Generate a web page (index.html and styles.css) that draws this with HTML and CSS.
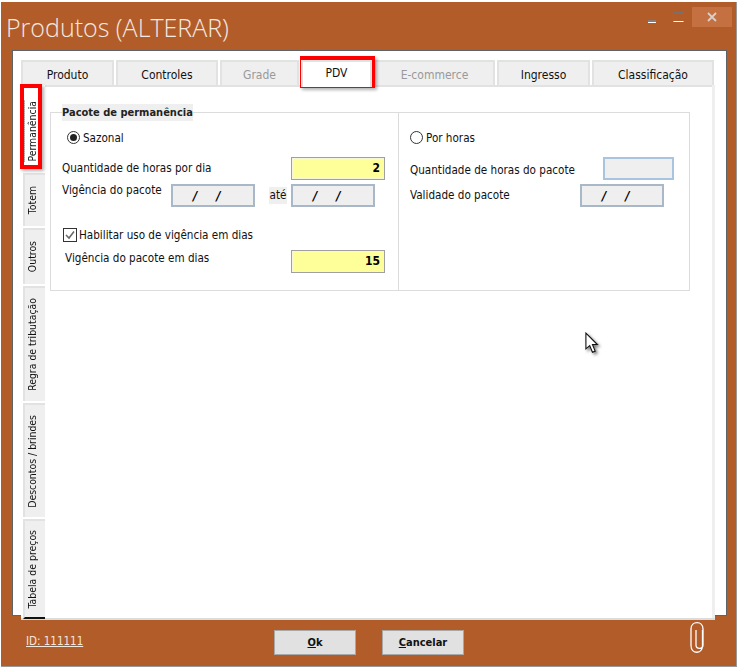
FILE: index.html
```html
<!DOCTYPE html>
<html lang="pt-BR">
<head>
<meta charset="utf-8">
<title>Produtos (ALTERAR)</title>
<link rel="stylesheet" href="styles.css">
</head>
<body>
<div class="window">
  <header class="titlebar">
    <h1 class="title">Produtos (ALTERAR)</h1>
    <div class="controls">
      <span class="ctl ctl-min"><i></i></span>
      <span class="ctl ctl-max"><i></i></span>
      <span class="ctl ctl-close"><svg width="12" height="10" viewBox="0 0 12 10"><path d="M2 1l8 8M10 1l-8 8" stroke="#d9d0ca" stroke-width="1.8" fill="none"/></svg></span>
    </div>
  </header>
  <div class="sheet">
    <div class="tabs-top">
      <div class="ttab t1">Produto</div>
      <div class="ttab t2">Controles</div>
      <div class="ttab t3 off">Grade</div>
      <div class="ttab t4 active">PDV</div>
      <div class="ttab t5 off">E-commerce</div>
      <div class="ttab t6">Ingresso</div>
      <div class="ttab t7">Classificação</div>
    </div>
    <div class="tabbody">
      <div class="tabs-side">
        <div class="stab s1 sactive"><span>Permanência</span></div>
        <div class="stab s2"><span>Totem</span></div>
        <div class="stab s3"><span>Outros</span></div>
        <div class="stab s4"><span>Regra de tributação</span></div>
        <div class="stab s5"><span>Descontos / brindes</span></div>
        <div class="stab s6"><span>Tabela de preços</span></div>
      </div>
      <main class="page">
        <section class="group">
          <div class="legend">Pacote de permanência</div>
          <div class="col col-left">
            <label class="radio-row r-left"><span class="radio on"></span>Sazonal</label>
            <div class="row row-qty"><span class="lbl">Quantidade de horas por dia</span><span class="input yellow">2</span></div>
            <div class="row row-vig">
              <span class="lbl">Vigência do pacote</span>
              <span class="input date d1"><b>/</b><b>/</b></span>
              <span class="ate">até</span>
              <span class="input date d2"><b>/</b><b>/</b></span>
            </div>
            <label class="check-row"><span class="check"><svg width="12" height="12" viewBox="0 0 12 12"><path d="M2 6l3 3 5-6.500" stroke="#666" stroke-width="1.500" fill="none"/></svg></span>Habilitar uso de vigência em dias</label>
            <div class="row row-days"><span class="lbl">Vigência do pacote em dias</span><span class="input yellow">15</span></div>
          </div>
          <div class="col col-right">
            <label class="radio-row"><span class="radio"></span>Por horas</label>
            <div class="row row-rqty"><span class="lbl">Quantidade de horas do pacote</span><span class="input blank"></span></div>
            <div class="row row-rval"><span class="lbl">Validade do pacote</span><span class="input date d3"><b>/</b><b>/</b></span></div>
          </div>
        </section>
      </main>
      <div class="scrolltrack"></div>
    </div>
  </div>
  <footer class="footer">
    <a class="idlink" href="#">ID: 111111</a>
    <div class="buttons">
      <button class="btn"><u>O</u>k</button>
      <button class="btn"><u>C</u>ancelar</button>
    </div>
    <svg class="clip" width="17" height="33" viewBox="0 0 17 33"><path d="M13.500 9v15.500c0 9-11.500 9-11.500 0V8c0-8.500 12-8.500 12 0v16c0 4.500-7 4.500-7 0V9" stroke="#fff" stroke-width="1.300" fill="none"/></svg>
  </footer>
  <div class="mark mark-pdv"></div>
  <div class="mark mark-perm"></div>
  <svg class="cursor" width="18" height="24" viewBox="0 0 16 22"><path d="M1.500 1v14.500l3.500-3 2.500 6 2.500-1-2.500-6h4.500z" fill="#fff" stroke="#111" stroke-width="1"/></svg>
</div>
</body>
</html>
```
FILE: styles.css
```css
* { box-sizing: border-box; }
html, body { margin: 0; padding: 0; background: #fff; }
body { width: 739px; height: 668px; overflow: hidden; font-family: "DejaVu Sans Condensed", "DejaVu Sans", sans-serif; font-size: 11.6px; color: #111; }
.window { position: relative; margin: 2px 1px 0 1px; width: 736px; height: 665px; background: #b25c2a; display: flex; flex-direction: column; border-bottom: 1px solid #999; border-right: 1px solid #999; }
.titlebar { height: 48px; display: flex; justify-content: space-between; padding: 0 4px 0 5px; flex: none; }
.title { margin: 8px 0 0; font: 300 25px/34px "Open Sans", sans-serif; color: #f4e9e0; }
.controls { display: flex; height: 20px; margin-top: 5px; }
.ctl { display: flex; width: 27px; height: 20px; justify-content: center; align-items: center; }
.ctl-min i { display: block; width: 8px; height: 3px; background: #8b7a72; border-bottom: 1px solid #fff; margin-top: 9px; }
.ctl-max i { display: block; width: 11px; height: 10px; border: 2px solid #77716d; border-bottom-color: #fff; border-width: 2px 1px 1px; }
.ctl-close { width: 40px; background: #c47040; }
.sheet { flex: none; margin-left: 11px; width: 715px; height: 566px; background: #fff; border: 1px solid #5e6368; padding: 9px 0 0 8px; position: relative; }
.tabs-top { display: flex; height: 25px; gap: 2px; }
.ttab { height: 25px; background: #efefef; border: 2px solid #e2e2e2; border-bottom: 0; display: flex; align-items: center; justify-content: center; font-size: 12px; padding-top: 3px; color: #111; }
.ttab.off { color: #999; }
.ttab.active { background: #fff; position: relative; height: 27px; padding-top: 0; padding-bottom: 3px; z-index: 1; }
.t1 { width: 93px; } .t2 { width: 102px; } .t3 { width: 79px; } .t4 { width: 71px; } .t5 { width: 121px; } .t6 { width: 93px; } .t7 { width: 122px; }
.tabbody { display: flex; height: 535px; width: 694px; border-bottom: 2px solid #dcdcdc; }
.tabs-side { width: 24px; flex: none; padding-left: 2px; display: flex; flex-direction: column; gap: 2px; background: #fff; }
.stab { width: 22px; flex: none; background: #efefef; border: solid #e2e2e2; border-width: 2px 0 0 2px; display: flex; align-items: center; justify-content: center; padding-right: 6px; }
.stab span { writing-mode: vertical-rl; transform: rotate(180deg); font-size: 10.400px; white-space: nowrap; line-height: 14px; }
.sactive { background: #fff; border: 0; padding: 6px 6px 0 0; }
.sactive span { border-right: 1px dotted #666; }
.s1 { height: 86px; } .s2 { height: 53px; } .s3 { height: 56px; } .s4 { height: 115px; } .s5 { height: 114px; } .s6 { height: 100px; border-bottom: 2px solid #111; }
.page { flex: 1; padding: 25px 0 0 5px; background: #fff; border-top: 2px solid #e2e2e2; }
.scrolltrack { width: 3px; background: #efefef; }
.group { position: relative; display: flex; width: 640px; height: 179px; border: 1px solid #dcdcdc; }
.legend { position: absolute; left: 11px; top: -9px; background: #efefef; font-weight: 700; font-size: 11px; line-height: 17px; color: #222; }
.col { display: flex; flex-direction: column; height: 100%; }
.col-left { width: 348px; border-right: 1px solid #dcdcdc; padding: 0 13px 0 11px; }
.col-right { flex: 1; padding-left: 11px; }
.radio-row { display: flex; align-items: center; height: 17px; margin-top: 16px; gap: 3px; }
.r-left { padding-left: 5px; }
.radio { width: 13px; height: 13px; border-radius: 50%; border: 1px solid #333; background: #fff; display: inline-block; position: relative; }
.radio.on::after { content: ""; position: absolute; inset: 2px; border-radius: 50%; background: #222; }
.row { display: flex; align-items: flex-start; }
.row .lbl { line-height: 16px; white-space: nowrap; }
.input { display: block; height: 23px; border: 1px solid #a0a0a0; box-shadow: inset 0 0 0 1px #f6f6d8; background: #efefef; text-align: right; font-weight: 700; font-size: 12px; line-height: 20px; padding-right: 4px; }
.yellow { width: 94px; background: #ffff99; color: #000; margin-left: auto; }
.date { display: flex; gap: 19px; padding: 0 0 0 20px; border: 2px solid #a9b8c8; box-shadow: none; width: 84px; color: #000; font-style: italic; font-size: 13px; }
.blank { width: 71px; margin-left: auto; border: 2px solid #a9c4e0; box-shadow: none; }
.row-qty { margin-top: 11px; height: 23px; }
.row-qty .lbl { margin-top: 3px; }
.row-vig { margin-top: 3px; height: 24px; }
.row-vig .lbl { width: 109px; margin-top: -1px; }
.ate { margin-left: 14px; width: 18px; background: #efefef; height: 17px; line-height: 17px; margin-top: 4px; text-align: center; }
.d1 { margin-top: 1px; } .d2 { margin-top: 1px; margin-left: 4px; }
.check-row { display: flex; align-items: center; height: 18px; margin-top: 19px; gap: 2px; }
.check { width: 14px; height: 14px; border: 1px solid #333; background: #fff; display: flex; margin-left: 1px; }
.row-days { margin-top: 6px; }
.row-days .lbl { margin-left: 3px; }
.row-rqty { margin-top: 11px; width: 264px; }
.row-rqty .lbl { margin-top: 5px; }
.row-rval { margin-top: 4px; }
.row-rval .lbl { width: 170px; margin-top: 3px; }
.footer { flex: 1; display: flex; align-items: flex-start; position: relative; padding-left: 25px; }
.idlink { color: #f4e7dc; font-size: 11.500px; margin-top: 18px; text-decoration: underline; width: 53px; white-space: nowrap; }
.buttons { display: flex; gap: 26px; margin-left: 195px; margin-top: 14px; }
.btn { width: 82px; height: 25px; background: #e1e1e1; border: 1px solid #a8a8a8; font: 700 11px "DejaVu Sans Condensed", "DejaVu Sans", sans-serif; color: #111; padding: 0; }
.clip { position: absolute; right: 30px; top: 5px; }
.mark { position: absolute; border: 4px solid #f00; box-shadow: 2px 2px 3px rgba(0,0,0,.3); }
.mark-pdv { left: 299px; top: 54px; width: 75px; height: 32px; }
.mark-perm { left: 19px; top: 82px; width: 22px; height: 85px; }
.cursor { position: absolute; left: 583px; top: 330px; filter: drop-shadow(2px 2px 1.500px rgba(0,0,0,.5)); }
```
